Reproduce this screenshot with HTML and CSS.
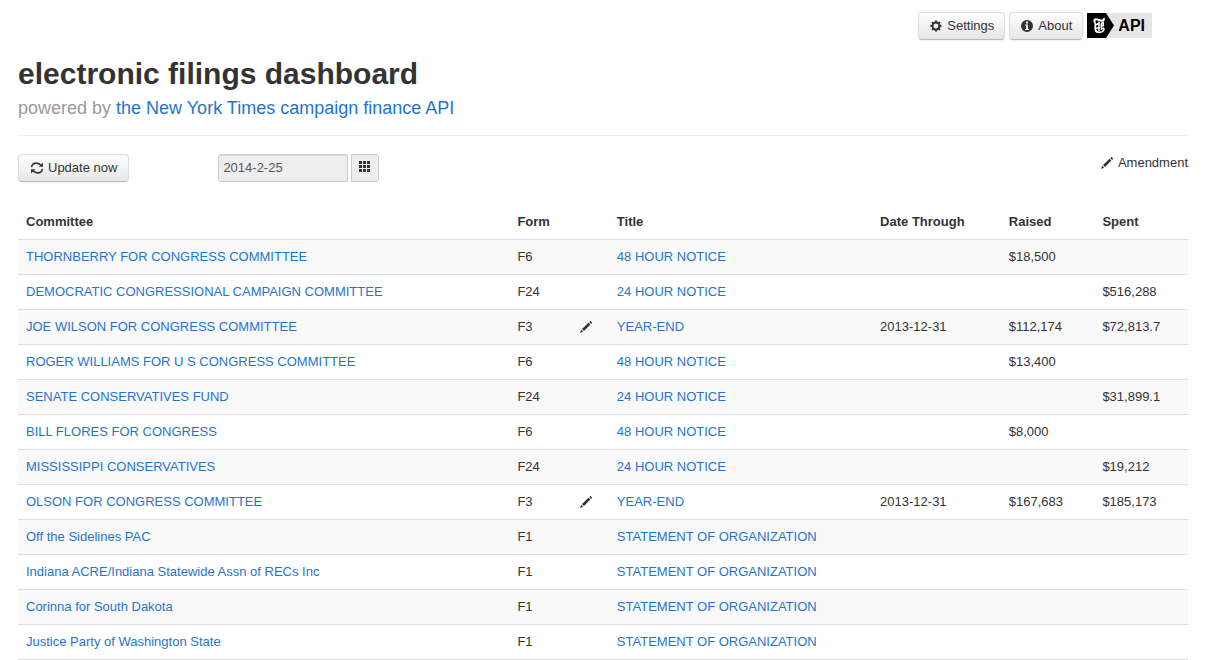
FILE: index.html
```html
<!DOCTYPE html>
<html lang="en">
<head>
<meta charset="utf-8">
<title>electronic filings dashboard</title>
<link rel="stylesheet" href="styles.css">
</head>
<body>
<svg class="symbols" aria-hidden="true">
  <symbol id="pencil" viewBox="0 0 14 14"><path d="M10.200 2l.7-.7q.5-.4 1 0l.9.9q.4.5 0 1l-.7.700zM9.500 2.700l1.900 1.900-6.400 6.400-2-1.900zM2.300 9.800l1.900 1.900L1 13z"/></symbol>
</svg>
<div class="container">
  <nav class="actions">
    <button class="btn" type="button"><svg class="icon" viewBox="0 0 14 14"><path fill-rule="evenodd" d="M6 1.500h2l.3 1.300 1 .4 1.100-.7 1.100 1.100-.7 1.100.4 1 1.300.3v2l-1.300.3-.4 1 .7 1.100-1.100 1.100-1.100-.7-1 .4L8 12.500H6l-.3-1.300-1-.4-1.100.7-1.100-1.100.7-1.100-.4-1L1.500 8V6l1.300-.3.4-1-.7-1.100 1.100-1.100 1.100.7 1-.4zM7 4.500a2.500 2.500 0 1 0 0 5 2.500 2.500 0 0 0 0-5z"/></svg>Settings</button>
    <button class="btn" type="button"><svg class="icon" viewBox="0 0 14 14"><path fill-rule="evenodd" d="M7 1a6 6 0 1 1 0 12A6 6 0 0 1 7 1zM6 2.500v2h2v-2zM5 5.500v1h1V10H5v1h4v-1H8V5.500z"/></svg>About</button>
    <a class="api" href="#" aria-label="New York Times API"><svg class="api-mark" viewBox="0 0 28 25" aria-hidden="true"><path d="M0 0h19l8 12.500L19 25H0z"/><g fill="none" stroke="#fff"><path stroke-width="2" d="M8.500 9.600C6.600 8.800 7 6 9.200 6.200c2 .1 3.500 1.600 5.800 1.500 1.600-.1 2.400-1.300 1.600-2.600"/><path stroke-width="1.700" d="M8.300 10v6.500c.4 2 2.300 3 4.200 2.900 2.600-.1 4.600-2 4.600-4.200"/><path stroke-width="1.500" d="M12 8.500v9.500M8.500 12.200l3-1.700M8.500 15.800l3.500-1.700M14.300 10.200v6.500M14 10.500l2.800-1.200M14 13l3-.6M14.200 16.300l2.600-1.600M16.300 9.500v3"/></g></svg><span>API</span></a>
  </nav>
  <header class="masthead">
    <h1>electronic filings dashboard</h1>
    <p>powered by <a href="#">the New York Times campaign finance API</a></p>
  </header>
  <div class="toolbar">
    <button class="btn" type="button"><svg class="icon" viewBox="0 0 14 14"><path fill="none" stroke="#333" stroke-width="1.600" d="M1.500 6.200C1.900 3.500 4 2.100 6.500 2.100c2.100 0 3.300.8 4.600 2.300M12.500 7.800c-.4 2.700-2.500 4.100-5 4.100-2.100 0-3.300-.8-4.600-2.300"/><path d="M13 1.500v4.300H8.700zM1 12.500V8.200h4.300z"/></svg>Update now</button>
    <div class="date">
      <input type="text" value="2014-2-25" aria-label="Filing date" readonly>
      <button class="calendar" type="button" aria-label="Choose date"><svg class="icon" viewBox="0 0 14 14"><path d="M1 1h3v3H1zM5 1h3v3H5zM9 1h3v3H9zM1 5h3v3H1zM5 5h3v3H5zM9 5h3v3H9zM1 9h3v3H1zM5 9h3v3H5zM9 9h3v3H9z"/></svg></button>
    </div>
    <div class="legend"><svg class="icon"><use href="#pencil"/></svg>Amendment</div>
  </div>
  <table class="filings">
    <colgroup><col class="c-committee"><col class="c-form"><col class="c-mark"><col class="c-title"><col class="c-date"><col class="c-raised"><col class="c-spent"></colgroup>
    <thead><tr><th>Committee</th><th>Form</th><th></th><th>Title</th><th>Date Through</th><th>Raised</th><th>Spent</th></tr></thead>
    <tbody>
      <tr><td><a href="#">THORNBERRY FOR CONGRESS COMMITTEE</a></td><td>F6</td><td></td><td><a href="#">48 HOUR NOTICE</a></td><td></td><td>$18,500</td><td></td></tr>
      <tr><td><a href="#">DEMOCRATIC CONGRESSIONAL CAMPAIGN COMMITTEE</a></td><td>F24</td><td></td><td><a href="#">24 HOUR NOTICE</a></td><td></td><td></td><td>$516,288</td></tr>
      <tr><td><a href="#">JOE WILSON FOR CONGRESS COMMITTEE</a></td><td>F3</td><td><svg class="icon"><use href="#pencil"/></svg></td><td><a href="#">YEAR-END</a></td><td>2013-12-31</td><td>$112,174</td><td>$72,813.7</td></tr>
      <tr><td><a href="#">ROGER WILLIAMS FOR U S CONGRESS COMMITTEE</a></td><td>F6</td><td></td><td><a href="#">48 HOUR NOTICE</a></td><td></td><td>$13,400</td><td></td></tr>
      <tr><td><a href="#">SENATE CONSERVATIVES FUND</a></td><td>F24</td><td></td><td><a href="#">24 HOUR NOTICE</a></td><td></td><td></td><td>$31,899.1</td></tr>
      <tr><td><a href="#">BILL FLORES FOR CONGRESS</a></td><td>F6</td><td></td><td><a href="#">48 HOUR NOTICE</a></td><td></td><td>$8,000</td><td></td></tr>
      <tr><td><a href="#">MISSISSIPPI CONSERVATIVES</a></td><td>F24</td><td></td><td><a href="#">24 HOUR NOTICE</a></td><td></td><td></td><td>$19,212</td></tr>
      <tr><td><a href="#">OLSON FOR CONGRESS COMMITTEE</a></td><td>F3</td><td><svg class="icon"><use href="#pencil"/></svg></td><td><a href="#">YEAR-END</a></td><td>2013-12-31</td><td>$167,683</td><td>$185,173</td></tr>
      <tr><td><a href="#">Off the Sidelines PAC</a></td><td>F1</td><td></td><td><a href="#">STATEMENT OF ORGANIZATION</a></td><td></td><td></td><td></td></tr>
      <tr><td><a href="#">Indiana ACRE/Indiana Statewide Assn of RECs Inc</a></td><td>F1</td><td></td><td><a href="#">STATEMENT OF ORGANIZATION</a></td><td></td><td></td><td></td></tr>
      <tr><td><a href="#">Corinna for South Dakota</a></td><td>F1</td><td></td><td><a href="#">STATEMENT OF ORGANIZATION</a></td><td></td><td></td><td></td></tr>
      <tr><td><a href="#">Justice Party of Washington State</a></td><td>F1</td><td></td><td><a href="#">STATEMENT OF ORGANIZATION</a></td><td></td><td></td><td></td></tr>
    </tbody>
  </table>
</div>
</body>
</html>
```

FILE: styles.css
```css
* { box-sizing: border-box; }
body {
  margin: 0;
  background: #fff;
  color: #333;
  font: 13px/18px "Helvetica Neue", Helvetica, "Liberation Sans", Arial, sans-serif;
}
a { color: #1f75cb; text-decoration: none; }
a:hover { text-decoration: underline; }
.symbols { display: none; }
.container { padding: 12px 17px 0 18px; }
.icon { display: block; flex: none; width: 14px; height: 14px; fill: #333; }

.btn {
  display: flex;
  align-items: center;
  gap: 4px;
  height: 28px;
  padding: 0 10px;
  border: 1px solid #ccc;
  border-color: #ddd #ddd #bbb;
  border-radius: 4px;
  background: linear-gradient(#fff, #e6e6e6);
  box-shadow: 0 1px 2px rgba(0, 0, 0, .06);
  color: #333;
  font: inherit;
  white-space: nowrap;
}

.actions { display: flex; justify-content: flex-end; align-items: flex-start; gap: 4px; padding-right: 36px; }
.api {
  display: flex;
  align-items: center;
  gap: 3px;
  height: 25px;
  margin-top: 1px;
  padding-right: 7px;
  background: #e5e5e5;
  color: #000;
  font: bold 16px/25px "Liberation Sans", Arial, sans-serif;
}
.api-mark { display: block; width: 28px; height: 25px; }

.masthead { padding: 16px 0 14px; border-bottom: 1px solid #eee; }
.masthead h1 { margin: 0; font-size: 30px; line-height: 36px; }
.masthead p { margin: 0; padding-top: 3px; color: #999; font-size: 18px; line-height: 26px; }

.toolbar { display: flex; align-items: flex-start; padding-top: 18px; }
.toolbar .btn { padding: 0 11px; margin-right: 89px; }
.date { display: flex; gap: 3px; }
.date input {
  width: 130px;
  height: 28px;
  padding: 0 4px 2px;
  border: 1px solid #ccc;
  border-radius: 3px 0 0 3px;
  background: #eee;
  box-shadow: inset 0 1px 1px rgba(0, 0, 0, .08);
  color: #555;
  font: inherit;
}
.calendar {
  width: 28px;
  height: 28px;
  padding: 0 6px 2px;
  border: 1px solid #ccc;
  border-radius: 0 3px 3px 0;
  background: #eee;
}
.legend { display: flex; align-items: center; gap: 4px; margin-left: auto; }

.filings { width: 100%; margin-top: 23px; table-layout: fixed; border-collapse: collapse; }
.filings th, .filings td { padding: 8px; text-align: left; vertical-align: middle; line-height: 18px; white-space: nowrap; }
.filings td { height: 35px; border-top: 1px solid #ddd; }
.filings tbody tr:nth-child(odd) { background: #f9f9f9; }
.filings tbody tr:last-child td { border-bottom: 1px solid #ddd; }
.c-committee { width: 42%; }
.c-form { width: 5.3%; }
.c-mark { width: 3.2%; }
.c-title { width: 22.5%; }
.c-date { width: 11%; }
.c-raised { width: 8%; }
.c-spent { width: 8%; }
```
